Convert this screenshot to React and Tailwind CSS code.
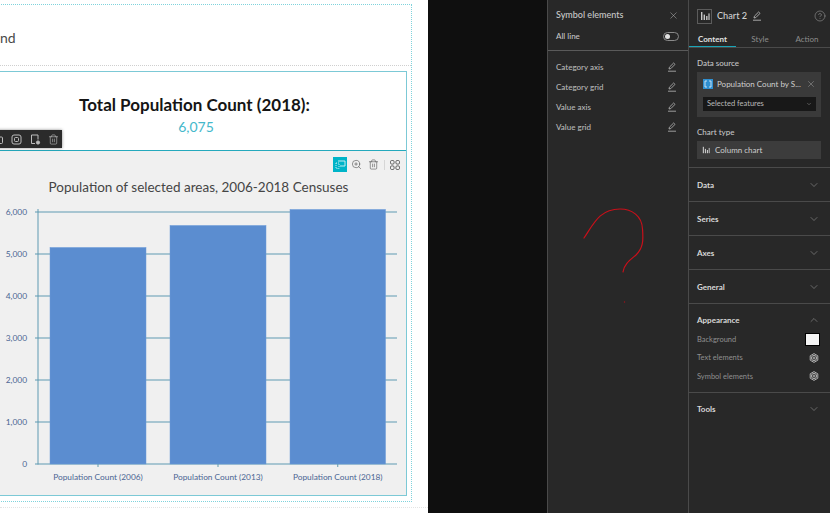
import React from "react";
import { ChevronDown, ChevronUp, X, ZoomIn, CircleHelp, Trash2 } from "lucide-react";

function Pen({ className = "" }) {
  return (
    <svg width="10" height="10" viewBox="0 0 10 10" fill="none" stroke="currentColor" strokeWidth="0.8" className={className}>
      <path d="M2 7 L2.4 5.2 L6.6 1 L8 2.4 L3.8 6.6 Z" />
      <path d="M1 9.2 H9" />
    </svg>
  );
}

function Gear() {
  return (
    <svg width="10" height="10" viewBox="0 0 10 10" fill="none" stroke="#c0c0c0" strokeWidth="0.9">
      <path d="M5 0.6 L8.8 2.8 V7.2 L5 9.4 L1.2 7.2 V2.8 Z" />
      <circle cx="5" cy="5" r="2.6" />
      <circle cx="5" cy="5" r="1" />
    </svg>
  );
}

function BarsIcon({ size = 10, color = "#c8c8c8" }) {
  return (
    <svg width={size} height={size} viewBox="0 0 10 10" fill={color}>
      <rect x="1" y="1" width="1.4" height="8" />
      <rect x="3.6" y="3.6" width="1.4" height="5.4" />
      <rect x="6.1" y="5" width="1.4" height="4" />
      <rect x="8.4" y="2.4" width="1.2" height="6.6" />
    </svg>
  );
}

function Section({ title, last = false }) {
  return (
    <div className={last ? "flex h-[32px] items-center justify-between pl-2 pr-[10px]" : "flex h-[34px] items-center justify-between border-b border-[#4a4a4a] pl-2 pr-[10px]"}>
      <span className="text-[8px] font-bold text-[#d8d8d8]">{title}</span>
      <ChevronDown size={12} strokeWidth={1} color="#a8a8a8" />
    </div>
  );
}

function SymbolRow({ label }) {
  return (
    <div className="flex h-5 items-center justify-between pl-2 pr-[11px] text-[#b9b9b9]">
      <span className="text-[8px] font-medium">{label}</span>
      <Pen />
    </div>
  );
}

function AppearanceRow({ label, children }) {
  return (
    <div className="flex h-[18.5px] items-center justify-between pr-[11px] text-[7.5px] text-[#8f8f8f]">
      <span>{label}</span>
      {children}
    </div>
  );
}

function Chart() {
  const ticks = [
    ["6,000", 212],
    ["5,000", 254],
    ["4,000", 296],
    ["3,000", 338],
    ["2,000", 380],
    ["1,000", 422],
    ["0", 464],
  ];
  const bars = [
    { x: 50, y: 247.5, w: 96, label: "Population Count (2006)" },
    { x: 170, y: 225.5, w: 96, label: "Population Count (2013)" },
    { x: 290, y: 209.5, w: 95.5, label: "Population Count (2018)" },
  ];
  return (
    <svg width="405" height="300" viewBox="0 200 405 300" className="block">
      {ticks.map(([t, y]) => (
        <g key={t}>
          <line x1="35" x2="397" y1={y} y2={y} stroke="#5f9ab2" strokeWidth="1" />
          <text x="27" y={y + 3} textAnchor="end" fontSize="8.4" fill="#4a6593">{t}</text>
        </g>
      ))}
      <line x1="38" x2="38" y1="209" y2="464.5" stroke="#5f9ab2" strokeWidth="1" />
      {bars.map((b) => (
        <g key={b.label}>
          <rect x={b.x} y={b.y} width={b.w} height={464 - b.y} fill="#5b8dd0" stroke="#6b9ad8" strokeWidth="0.5" />
          <line x1={b.x + b.w / 2} x2={b.x + b.w / 2} y1="464" y2="467" stroke="#5f9ab2" />
          <text x={b.x + b.w / 2} y="480" textAnchor="middle" fontSize="8.3" fill="#4a6593">{b.label}</text>
        </g>
      ))}
    </svg>
  );
}

export default function App() {
  return (
    <div className="flex h-[513px] w-[830px] overflow-hidden bg-white font-['Lato',sans-serif]">
      {/* canvas */}
      <div className="h-full w-[428px] shrink-0 overflow-hidden bg-white pt-1">
        <div className="ml-[-20px] w-[432px] border-r border-t border-b border-dotted border-[#7fd3dc]">
          <div className="flex h-[61px] items-center border-b border-dotted border-[#cfcfcf] pl-5 text-[14px] text-[#4a4a4a]">
            <span className="pt-[4px]">nd</span>
          </div>
          <div className="mt-[5px] mr-[4px] border border-[#7cc9d6]">
            <div className="relative flex h-[79px] flex-col items-center justify-center border-b border-[#25a9bd] pl-[2px] pt-[8px]">
              <div className="text-[17px] font-bold leading-[22px] text-[#151515]">Total Population Count (2018):</div>
              <div className="mt-px pl-[3px] text-[14px] leading-[20px] text-[#45b8cb]">6,075</div>
              <div className="absolute bottom-[2px] left-0 flex h-[18px] w-[81px] items-center justify-end gap-[7.5px] bg-[#2b2b2b] pr-[3px] shadow-[0_0_3px_rgba(0,0,0,0.45)]">
                <svg width="11" height="11" viewBox="0 0 11 11" fill="none" stroke="#bdbdbd"><rect x="1.5" y="3" width="8" height="6.5" rx="1" /></svg>
                <svg width="11" height="11" viewBox="0 0 11 11" fill="none" stroke="#bdbdbd"><rect x="1" y="1" width="9" height="9" rx="2" /><rect x="3.5" y="3.5" width="4" height="4" rx="1" /></svg>
                <svg width="11" height="11" viewBox="0 0 11 11" fill="none" stroke="#bdbdbd"><path d="M8 5.5 V1 H1.5 V9.5 H5" /><circle cx="8" cy="8.5" r="1.6" fill="#bdbdbd" /></svg>
                <Trash2 size={11} strokeWidth={1.2} color="#d0d0d0" />
              </div>
            </div>
            <div className="bg-[#f0f0f0] pl-5">
              <div className="flex h-[22px] items-center justify-end pr-[6px] pt-[5px]">
                <div className="mr-[4px] flex h-[15px] w-[14px] items-center justify-center bg-[#00b4c8]">
                  <svg width="11" height="11" viewBox="0 0 11 11" fill="none" stroke="#d8f3f6" strokeWidth="0.9"><path d="M3 2 H10 V7 H5" /><path d="M1 4 H4 V9.5 H1 Z" strokeDasharray="1 1" /></svg>
                </div>
                <ZoomIn size={11} strokeWidth={1.2} color="#444" className="mr-[6px]" />
                <Trash2 size={11} strokeWidth={1.2} color="#444" className="mr-[5px]" />
                <div className="mr-[5px] h-[10px] w-px bg-[#d6d6d6]" />
                <svg width="10" height="10" viewBox="0 0 10 10" fill="none" stroke="#555" strokeWidth="0.9">
                  <rect x="0.5" y="0.5" width="3.6" height="3.6" rx="1.2" />
                  <rect x="5.9" y="0.5" width="3.6" height="3.6" rx="1.2" />
                  <rect x="0.5" y="5.9" width="3.6" height="3.6" rx="1.2" />
                  <rect x="5.9" y="5.9" width="3.6" height="3.6" rx="1.2" />
                </svg>
              </div>
              <div className="flex h-[27px] items-center justify-center pr-[10px] pt-px text-[13.5px] text-[#454545]">
                Population of selected areas, 2006-2018 Censuses
              </div>
              <div className="ml-[-20px] h-[295px] overflow-hidden">
                <div className="ml-[19px]"><Chart /></div>
              </div>
            </div>
          </div>
          <div className="h-[5px]" />
        </div>
        <div className="mt-[5px] border-t border-dotted border-[#e4e4e4]" />
      </div>

      {/* black gap */}
      <div className="h-full w-[119px] shrink-0 bg-[#0f0f0f]" />

      {/* symbol elements panel */}
      <div className="relative h-full w-[141px] shrink-0 border-l border-[#4a4a4a] bg-[#282828]">
        <div className="flex h-[26px] items-center justify-between pl-2 pr-[9px] pt-[4px]">
          <span className="text-[9px] font-medium text-[#c8c8c8]">Symbol elements</span>
          <X size={11} strokeWidth={1} color="#c8c8c8" />
        </div>
        <div className="flex h-[24px] items-center justify-between pb-1 pl-2 pr-[9px]">
          <span className="text-[8px] font-medium text-[#c4c4c4]">All line</span>
          <div className="flex h-[9px] w-[16px] items-center rounded-full border border-[#8a8a8a] pl-px">
            <div className="h-[5px] w-[5px] rounded-full bg-[#e0e0e0]" />
          </div>
        </div>
        <div className="mb-[6px] border-b border-[#5a5a5a]" />
        <SymbolRow label="Category axis" />
        <SymbolRow label="Category grid" />
        <SymbolRow label="Value axis" />
        <SymbolRow label="Value grid" />
        {/* annotation drawn over the panel */}
        <svg width="90" height="120" viewBox="0 0 90 120" fill="none" className="absolute left-[22px] top-[195px]">
          <path d="M14 43 C24 28 30 14 50 14 C62 14 72 21 72.5 34 C73.5 46 73 53 66 60 C60 65 54 69 53 77" stroke="#c8101a" strokeWidth="1.2" strokeLinecap="round" />
          <circle cx="54.5" cy="107" r="0.7" fill="#a01018" />
        </svg>
      </div>

      {/* settings panel */}
      <div className="h-full w-[142px] shrink-0 border-l border-[#4a4a4a] bg-[#282828]">
        <div className="flex h-[32px] items-center pl-2 pr-[4px]">
          <div className="flex h-[15px] w-[15px] items-center justify-center border border-[#5c5c5c]">
            <BarsIcon size={10} />
          </div>
          <span className="ml-[5px] text-[9.2px] font-medium text-[#d0d0d0]">Chart 2</span>
          <Pen className="ml-[5px] text-[#c8c8c8]" />
          <CircleHelp size={12} strokeWidth={1} color="#a8a8a8" className="ml-auto" />
        </div>
        <div className="flex h-[16px] border-b border-[#4a4a4a] text-[8px]">
          <div className="flex w-[47px] items-start justify-center border-b border-[#1aa5b8] pt-px font-bold text-[#e0e0e0]">Content</div>
          <div className="flex w-[48px] items-start justify-center pt-px text-[#8d8d8d]">Style</div>
          <div className="flex w-[46px] items-start justify-center pt-px text-[#8d8d8d]">Action</div>
        </div>
        <div className="pl-2 pr-2">
          <div className="flex h-[24px] items-end pb-[3px] text-[8px] font-medium text-[#c4c4c4]">Data source</div>
          <div className="h-[45px] w-[124px] bg-[#3a3a3a] pt-[7px]">
            <div className="flex h-[10px] items-center pl-[6px] pr-[5px]">
              <div className="flex h-[10px] w-[10px] shrink-0 items-center justify-center bg-[#2f8fd0]">
                <svg width="8" height="8" viewBox="0 0 8 8" fill="none" stroke="#e8f4fc" strokeWidth="0.8"><path d="M1 1 H3 M5 1 H7 M1 1 V7 M7 1 V7 M1 7 H3 M5 7 H7" /></svg>
              </div>
              <span className="ml-[4px] whitespace-nowrap text-[8px] text-[#cfcfcf]">Population Count by S...</span>
              <X size={10} strokeWidth={1} color="#b8b8b8" className="ml-auto shrink-0" />
            </div>
            <div className="ml-[6px] mt-[8px] flex h-[14px] w-[113px] items-center justify-between bg-[#181818] pl-[4px] pr-[4px] text-[7.5px] text-[#b8b8b8]">
              <span>Selected features</span>
              <ChevronDown size={6} strokeWidth={1.5} color="#b8b8b8" />
            </div>
          </div>
          <div className="flex h-[24px] items-end pb-[3px] text-[8px] font-medium text-[#c4c4c4]">Chart type</div>
          <div className="flex h-[18px] w-[124px] items-center bg-[#3c3c3c] pl-[5px] text-[8px] text-[#cfcfcf]">
            <BarsIcon size={8} />
            <span className="ml-[5px]">Column chart</span>
          </div>
        </div>
        <div className="mt-[8px] border-b border-[#4a4a4a]" />
        <Section title="Data" />
        <Section title="Series" />
        <Section title="Axes" />
        <Section title="General" />
        <div className="h-[89px] border-b border-[#4a4a4a] pl-2">
          <div className="flex h-[32px] items-center justify-between pr-[10px]">
            <span className="text-[8px] font-bold text-[#d8d8d8]">Appearance</span>
            <ChevronUp size={12} strokeWidth={1} color="#a8a8a8" />
          </div>
          <div className="mt-[-6px]">
            <AppearanceRow label="Background">
              <div className="mr-[-1px] h-[13px] w-[15px] border border-black bg-[#f4f4f4]" />
            </AppearanceRow>
            <AppearanceRow label="Text elements"><Gear /></AppearanceRow>
            <AppearanceRow label="Symbol elements"><Gear /></AppearanceRow>
          </div>
        </div>
        <Section title="Tools" last />
      </div>
    </div>
  );
}
